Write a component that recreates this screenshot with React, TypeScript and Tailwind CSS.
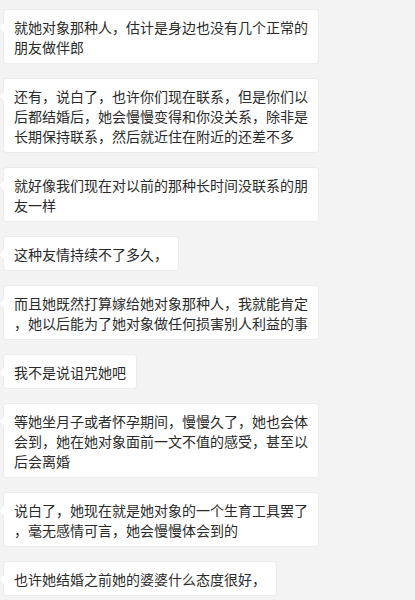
import React from "react";

const messages: string[][] = [
  ["就她对象那种人，估计是身边也没有几个正常的", "朋友做伴郎"],
  [
    "还有，说白了，也许你们现在联系，但是你们以",
    "后都结婚后，她会慢慢变得和你没关系，除非是",
    "长期保持联系，然后就近住在附近的还差不多",
  ],
  ["就好像我们现在对以前的那种长时间没联系的朋", "友一样"],
  ["这种友情持续不了多久，"],
  ["而且她既然打算嫁给她对象那种人，我就能肯定", "，她以后能为了她对象做任何损害别人利益的事"],
  ["我不是说诅咒她吧"],
  [
    "等她坐月子或者怀孕期间，慢慢久了，她也会体",
    "会到，她在她对象面前一文不值的感受，甚至以",
    "后会离婚",
  ],
  ["说白了，她现在就是她对象的一个生育工具罢了", "，毫无感情可言，她会慢慢体会到的"],
  ["也许她结婚之前她的婆婆什么态度很好，"],
];

function Bubble({ lines }: { lines: string[] }) {
  return (
    <div className="relative self-start rounded-[3px] bg-white pl-[10px] pr-[10px] pt-[7px] pb-[6px] shadow-[0_0_0_1px_#ececec]">
      <div className="absolute left-[-3px] top-[14px] h-[7px] w-[7px] rotate-45 bg-white" />
      {lines.map((l, i) => (
        <div key={i} className="relative whitespace-nowrap text-[14px] leading-[20px] text-[#2a2a2a]">
          {l}
        </div>
      ))}
    </div>
  );
}

export default function App() {
  return (
    <div
      className="h-[600px] w-[415px] overflow-hidden bg-[#f3f3f3] pl-[4px] pt-[10px]"
      style={{ fontFamily: '"Noto Sans CJK SC", "Noto Sans", sans-serif' }}
    >
      <div className="flex flex-col gap-[16px]">
        {messages.map((m, i) => (
          <Bubble key={i} lines={m} />
        ))}
      </div>
    </div>
  );
}
